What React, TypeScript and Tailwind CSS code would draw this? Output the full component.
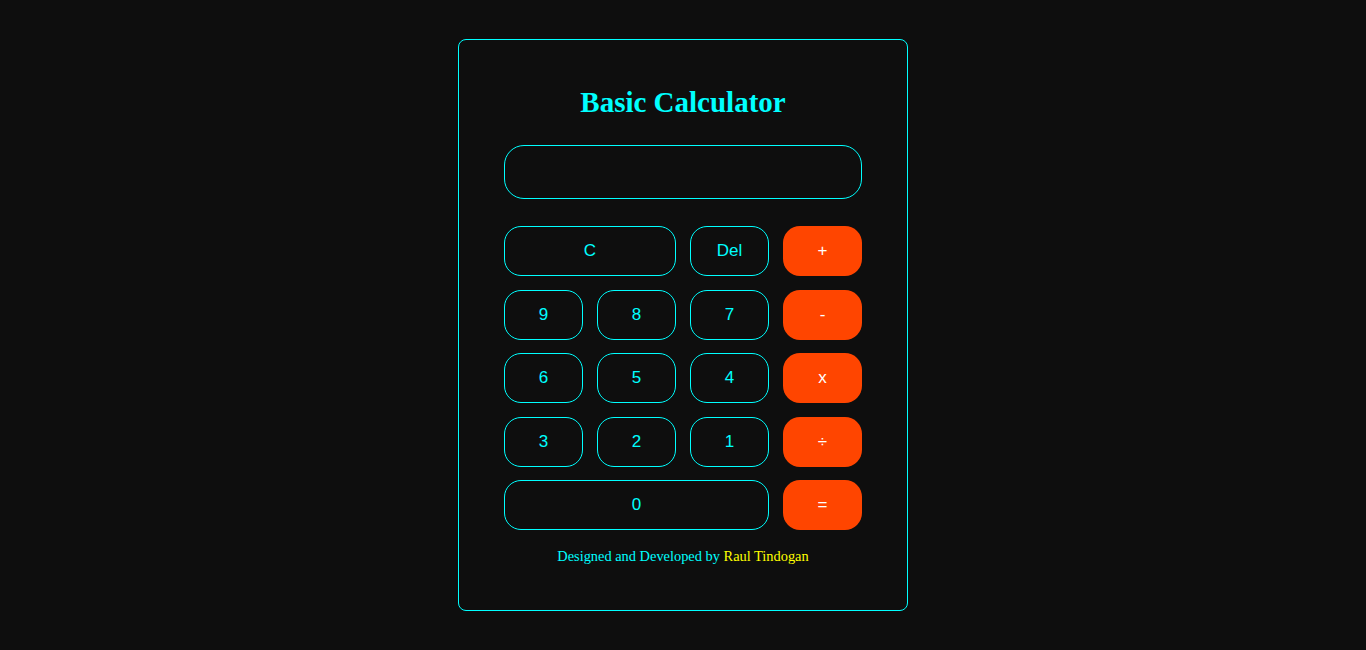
import React from 'react';

type Key = { label: string; span?: string; op?: boolean };

const keys: Key[] = [
  { label: 'C', span: 'col-span-2' },
  { label: 'Del' },
  { label: '+', op: true },
  { label: '9' },
  { label: '8' },
  { label: '7' },
  { label: '-', op: true },
  { label: '6' },
  { label: '5' },
  { label: '4' },
  { label: 'x', op: true },
  { label: '3' },
  { label: '2' },
  { label: '1' },
  { label: '÷', op: true },
  { label: '0', span: 'col-span-3' },
  { label: '=', op: true },
];

export default function App() {
  const [value, setValue] = React.useState('');

  const press = (k: string) => {
    if (k === 'C') return setValue('');
    if (k === 'Del') return setValue(v => v.slice(0, -1));
    if (k === '=') {
      try {
        const expr = value.replace(/x/g, '*').replace(/÷/g, '/');
        // eslint-disable-next-line no-new-func
        const res = Function(`return (${expr})`)();
        setValue(String(res));
      } catch {
        setValue('Error');
      }
      return;
    }
    setValue(v => v + k);
  };

  return (
    <div className="min-h-screen bg-[#0e0e0e] pt-[39px] flex justify-center items-start">
      <div className="w-[450px] border border-[#00ffff] rounded-lg px-[45px] pt-[46px] pb-[46px] flex flex-col">
        <h1 className="text-center text-[29px] leading-[33px] font-bold text-[#00ffff] font-['Liberation_Serif',serif]">
          Basic Calculator
        </h1>

        <input
          value={value}
          readOnly
          className="mt-[26px] h-[54px] w-full rounded-[20px] border border-[#00ffff] bg-[#0e0e0e] px-4 text-right text-2xl text-[#00ffff] outline-none font-['Liberation_Sans',sans-serif]"
        />

        <div className="mt-[27px] grid grid-cols-4 gap-x-[14px] gap-y-[13.5px]">
          {keys.map(k => (
            <button
              key={k.label}
              onClick={() => press(k.label)}
              className={`h-[50px] rounded-[17px] text-[17px] font-['Liberation_Sans',sans-serif] ${k.span ?? ''} ${
                k.op
                  ? 'bg-[#ff4500] text-white'
                  : 'border border-[#00ffff] bg-[#0e0e0e] text-[#00ffff]'
              }`}
            >
              {k.label}
            </button>
          ))}
        </div>

        <p className="mt-[18px] text-center text-[14.4px] leading-[16px] text-[#00ffff] font-['Liberation_Serif',serif]">
          Designed and Developed by <span className="text-[#ffff00]">Raul Tindogan</span>
        </p>
      </div>
    </div>
  );
}
